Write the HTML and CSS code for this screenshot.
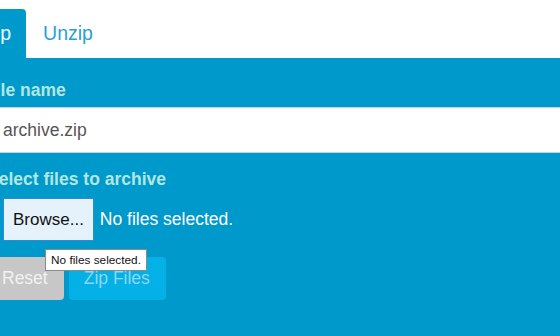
FILE: index.html
```html
<!DOCTYPE html>
<html lang="en">
<head>
<meta charset="utf-8">
<title>Zip</title>
<link rel="stylesheet" href="styles.css">
</head>
<body>
<div class="wrap">
  <ul class="tabs">
    <li class="tab active"><a href="#">Zip</a></li>
    <li class="tab"><a href="#">Unzip</a></li>
  </ul>
  <div class="panel">
    <label class="label" for="fname">File name</label>
    <input id="fname" class="text-input" type="text" value="archive.zip">
    <label class="label label-select">Select files to archive</label>
    <div class="file-row">
      <span class="browse">Browse...</span>
      <span class="file-status">No files selected.</span>
      <span class="tooltip">No files selected.</span>
    </div>
    <div class="actions">
      <button class="btn btn-reset" type="button">Reset</button>
      <button class="btn btn-zip" type="button">Zip Files</button>
    </div>
  </div>
</div>
</body>
</html>
```

FILE: styles.css
```css
html, body {
  margin: 0;
  padding: 0;
  height: 100%;
  overflow: hidden;
  background: #ffffff;
  font-family: "Liberation Sans", Arial, sans-serif;
}

.wrap {
  margin-left: -15px;
  height: 100%;
  display: flex;
  flex-direction: column;
}

.tabs {
  list-style: none;
  margin: 0 0 0 -16px;
  padding: 9px 0 0 0;
  display: flex;
  gap: 2px;
}

.tab a {
  display: block;
  padding: 11px 15px;
  font-size: 19.5px;
  line-height: 27px;
  text-decoration: none;
  color: #2aa1d3;
  border-radius: 4px 4px 0 0;
}

.tab.active a {
  background: #0099cc;
  color: #eef9fc;
}

.panel {
  flex: 1;
  background: #0099cc;
  padding-top: 20px;
  display: flex;
  flex-direction: column;
}

.label {
  display: block;
  font-weight: bold;
  font-size: 17.5px;
  line-height: 25px;
  color: #b2e7df;
  margin-bottom: 4px;
}

.label-select {
  margin: 14px 0 6px 2px;
}

.text-input {
  box-sizing: border-box;
  width: calc(100% + 40px);
  height: 46px;
  margin: 0;
  padding: 0 0 0 18px;
  border: 0;
  border-top: 1px solid #c7d3d8;
  border-bottom: 1px solid #c7d3d8;
  background: #ffffff;
  font-family: inherit;
  font-size: 17.5px;
  color: #555555;
  outline: none;
}

.file-row {
  position: relative;
  display: flex;
  align-items: center;
  gap: 6px;
  margin-left: 18px;
}

.browse {
  box-sizing: border-box;
  height: 43px;
  padding: 0 9px;
  display: flex;
  align-items: center;
  background: #e5f1fb;
  border: 1px solid #2f8ad8;
  font-size: 17px;
  color: #111111;
}

.file-status {
  font-size: 17.5px;
  color: #ffffff;
}

.tooltip {
  position: absolute;
  left: 42px;
  top: 51px;
  z-index: 2;
  box-sizing: border-box;
  width: 102px;
  height: 22px;
  display: flex;
  align-items: center;
  justify-content: center;
  background: #ffffff;
  border: 1px solid #8a8a8a;
  font-size: 11.8px;
  color: #111111;
}

.actions {
  display: flex;
  gap: 5px;
  margin: 16px 0 0 1px;
}

.btn {
  box-sizing: border-box;
  height: 43px;
  padding: 0 15px;
  border: 1px solid transparent;
  border-radius: 4px;
  font-family: inherit;
  font-size: 17.5px;
}

.btn-reset {
  background: #c7c7c7;
  color: #f2f2f2;
}

.btn-zip {
  background: #03b1e6;
  color: #8fd6ee;
  padding: 0 15px 0 14px;
}
```
